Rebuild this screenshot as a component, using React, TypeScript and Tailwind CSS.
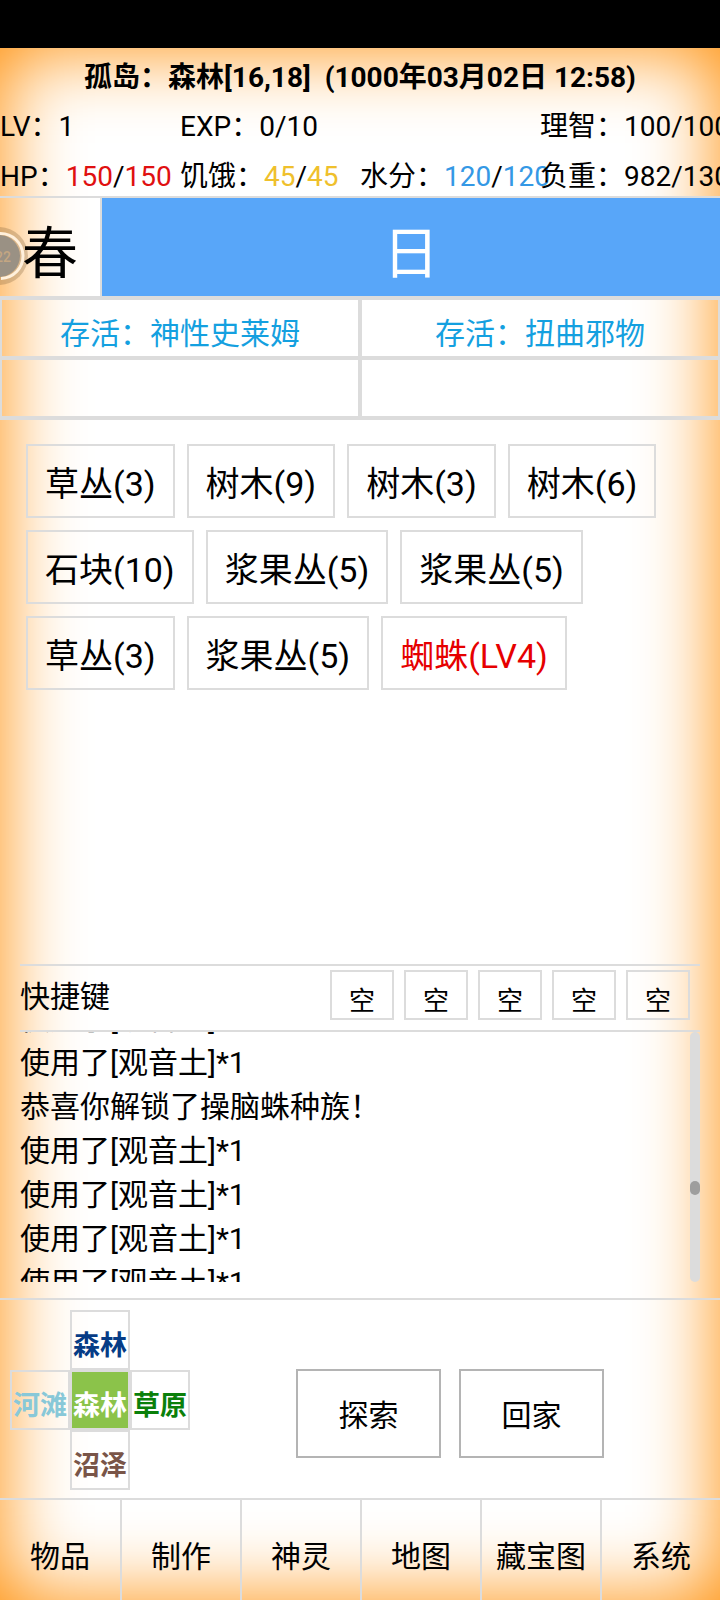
import React from 'react';

interface StatProps {
    label: string;
    children: React.ReactNode;
}

interface TileProps {
    name: string;
    className: string;
}

const resources = [
    { name: '草丛(3)' },
    { name: '树木(9)' },
    { name: '树木(3)' },
    { name: '树木(6)' },
    { name: '石块(10)' },
    { name: '浆果丛(5)' },
    { name: '浆果丛(5)' },
    { name: '草丛(3)' },
    { name: '浆果丛(5)' },
    { name: '蜘蛛(LV4)', hostile: true },
];

const logs = [
    '使用了[观音土]*1',
    '使用了[观音土]*1',
    '恭喜你解锁了操脑蛛种族！',
    '使用了[观音土]*1',
    '使用了[观音土]*1',
    '使用了[观音土]*1',
    '使用了[观音土]*1',
];

const survivors = ['存活：神性史莱姆', '存活：扭曲邪物', '', ''];

const menu = ['物品', '制作', '神灵', '地图', '藏宝图', '系统'];

const Stat: React.FC<StatProps> = ({ label, children }) => (
    <div className="min-w-0 whitespace-nowrap">
        {label}：{children}
    </div>
);

const Tile: React.FC<TileProps> = ({ name, className }) => (
    <button className={`h-[60px] w-[60px] whitespace-nowrap border-2 border-[#dcdcdc] pt-3 text-[27px] leading-[44px] font-bold ${className}`}>
        {name}
    </button>
);

// Floating timer ring docked to the left edge
const FloatingBall = () => (
    <svg className="absolute top-7 left-0 h-[60px] w-[30px]" viewBox="0 0 30 60" aria-hidden="true">
        <circle cx="-1" cy="30" r="29" fill="#8a6a40" fillOpacity="0.32" />
        <circle cx="-1" cy="30" r="21" fill="#9a9184" />
        <path d="M0 7.5 A22.500 22.500 0 0 1 1 52.500" fill="none" stroke="#fff0dc" strokeWidth="3" />
        <text x="-5" y="36" fontSize="14" fontFamily="Roboto" fontWeight="500" fill="#c4a682">22</text>
    </svg>
);

export default function App() {
    return (
        <div className="flex min-h-screen flex-col bg-white font-[Roboto,'Noto_Sans_CJK_SC',sans-serif] text-black">
            <div className="h-12 bg-black" />

            <main className="flex flex-1 flex-col overflow-hidden shadow-[inset_0_0_80px_#ff8c00]">
                <header className="text-[28px]">
                    <h1 className="h-[54px] text-center leading-[60px] font-bold whitespace-pre">
                        {'孤岛：森林[16,18]  (1000年03月02日 12:58)'}
                    </h1>
                    <div className="grid grid-cols-4 leading-[50px]">
                        <Stat label="LV">1</Stat>
                        <Stat label="EXP">0/10</Stat>
                        <div />
                        <Stat label="理智">100/100</Stat>
                    </div>
                    <div className="grid h-11 grid-cols-4 leading-[50px]">
                        <Stat label="HP">
                            <span className="text-[#e01010]">150</span>/<span className="text-[#e01010]">150</span>
                        </Stat>
                        <Stat label="饥饿">
                            <span className="text-[#efc02c]">45</span>/<span className="text-[#efc02c]">45</span>
                        </Stat>
                        <Stat label="水分">
                            <span className="text-[#3498e5]">120</span>/<span className="text-[#3498e5]">120</span>
                        </Stat>
                        <Stat label="负重">982/1300</Stat>
                    </div>
                </header>

                <section className="relative flex h-[102px] border-y-2 border-[#dcdcdc] text-[56px] leading-[112px]">
                    <FloatingBall />
                    <div className="relative w-[102px] border-r-2 border-[#dcdcdc] text-center">春</div>
                    <div className="flex-1 bg-[#58a6f9] text-center text-white">日</div>
                </section>

                <section className="grid grid-cols-2 border-b-2 border-[#dcdcdc]">
                    {survivors.map((name, i) => (
                        <div key={i} className="h-[60px] border-2 border-[#dcdcdc] text-center text-[30px] leading-[68px] text-[#14a0e0]">
                            {name}
                        </div>
                    ))}
                </section>

                <section className="flex flex-1 flex-wrap content-start gap-3 px-[26px] pt-6">
                    {resources.map((item, i) => (
                        <button
                            key={i}
                            className={`h-[74px] border-2 border-[#dcdcdc] px-[17px] pt-[6px] text-[34px] ${item.hostile ? 'text-[#e60000]' : ''}`}
                        >
                            {item.name}
                        </button>
                    ))}
                </section>

                <section className="mx-5">
                    <div className="flex h-[68px] justify-between border-y-2 border-[#dcdcdc] pt-1 pr-[10px]">
                        <h2 className="text-[30px] leading-[54px]">快捷键</h2>
                        <div className="flex gap-[10px]">
                            {[1, 2, 3, 4, 5].map((slot) => (
                                <button key={slot} className="h-[50px] w-16 border-2 border-[#dcdcdc] pt-[10px] text-[26px] leading-[38px]">
                                    空
                                </button>
                            ))}
                        </div>
                    </div>
                    <div className="flex h-[250px]">
                        <div className="flex flex-1 flex-col overflow-hidden text-[30px] leading-[44px]">
                            {logs.map((line, i) => (
                                <p key={i} className="shrink-0 first:-mt-[35px]">
                                    {line}
                                </p>
                            ))}
                        </div>
                        <div className="w-[10px] rounded-full bg-[#dcdcdc] pt-[149px]">
                            <div className="h-[14px] rounded-full bg-[#9e9e9e]" />
                        </div>
                    </div>
                </section>

                <section className="mt-4 flex h-[200px] border-t-2 border-[#dcdcdc] pt-[10px] pl-[10px]">
                    <div className="grid grid-cols-[60px_60px_60px] content-start">
                        <Tile name="森林" className="col-start-2 text-[#063c86]" />
                        <Tile name="河滩" className="col-start-1 text-[#88c8d8]" />
                        <Tile name="森林" className="bg-[#8bc34a] text-white" />
                        <Tile name="草原" className="text-[#0a800a]" />
                        <Tile name="沼泽" className="col-start-2 text-[#795548]" />
                    </div>
                    <div className="flex gap-[18px] pt-[59px] pl-[106px]">
                        <button className="h-[89px] w-[145px] border-2 border-[#b4b4b4] pt-1 text-[30px]">探索</button>
                        <button className="h-[89px] w-[145px] border-2 border-[#b4b4b4] pt-1 text-[30px]">回家</button>
                    </div>
                </section>

                <nav className="grid h-[102px] grid-cols-6 border-t-2 border-[#dcdcdc]">
                    {menu.map((name) => (
                        <button key={name} className="border-l-2 border-[#dcdcdc] pt-3 text-[30px] whitespace-nowrap first:border-l-0">
                            {name}
                        </button>
                    ))}
                </nav>
            </main>
        </div>
    );
}
